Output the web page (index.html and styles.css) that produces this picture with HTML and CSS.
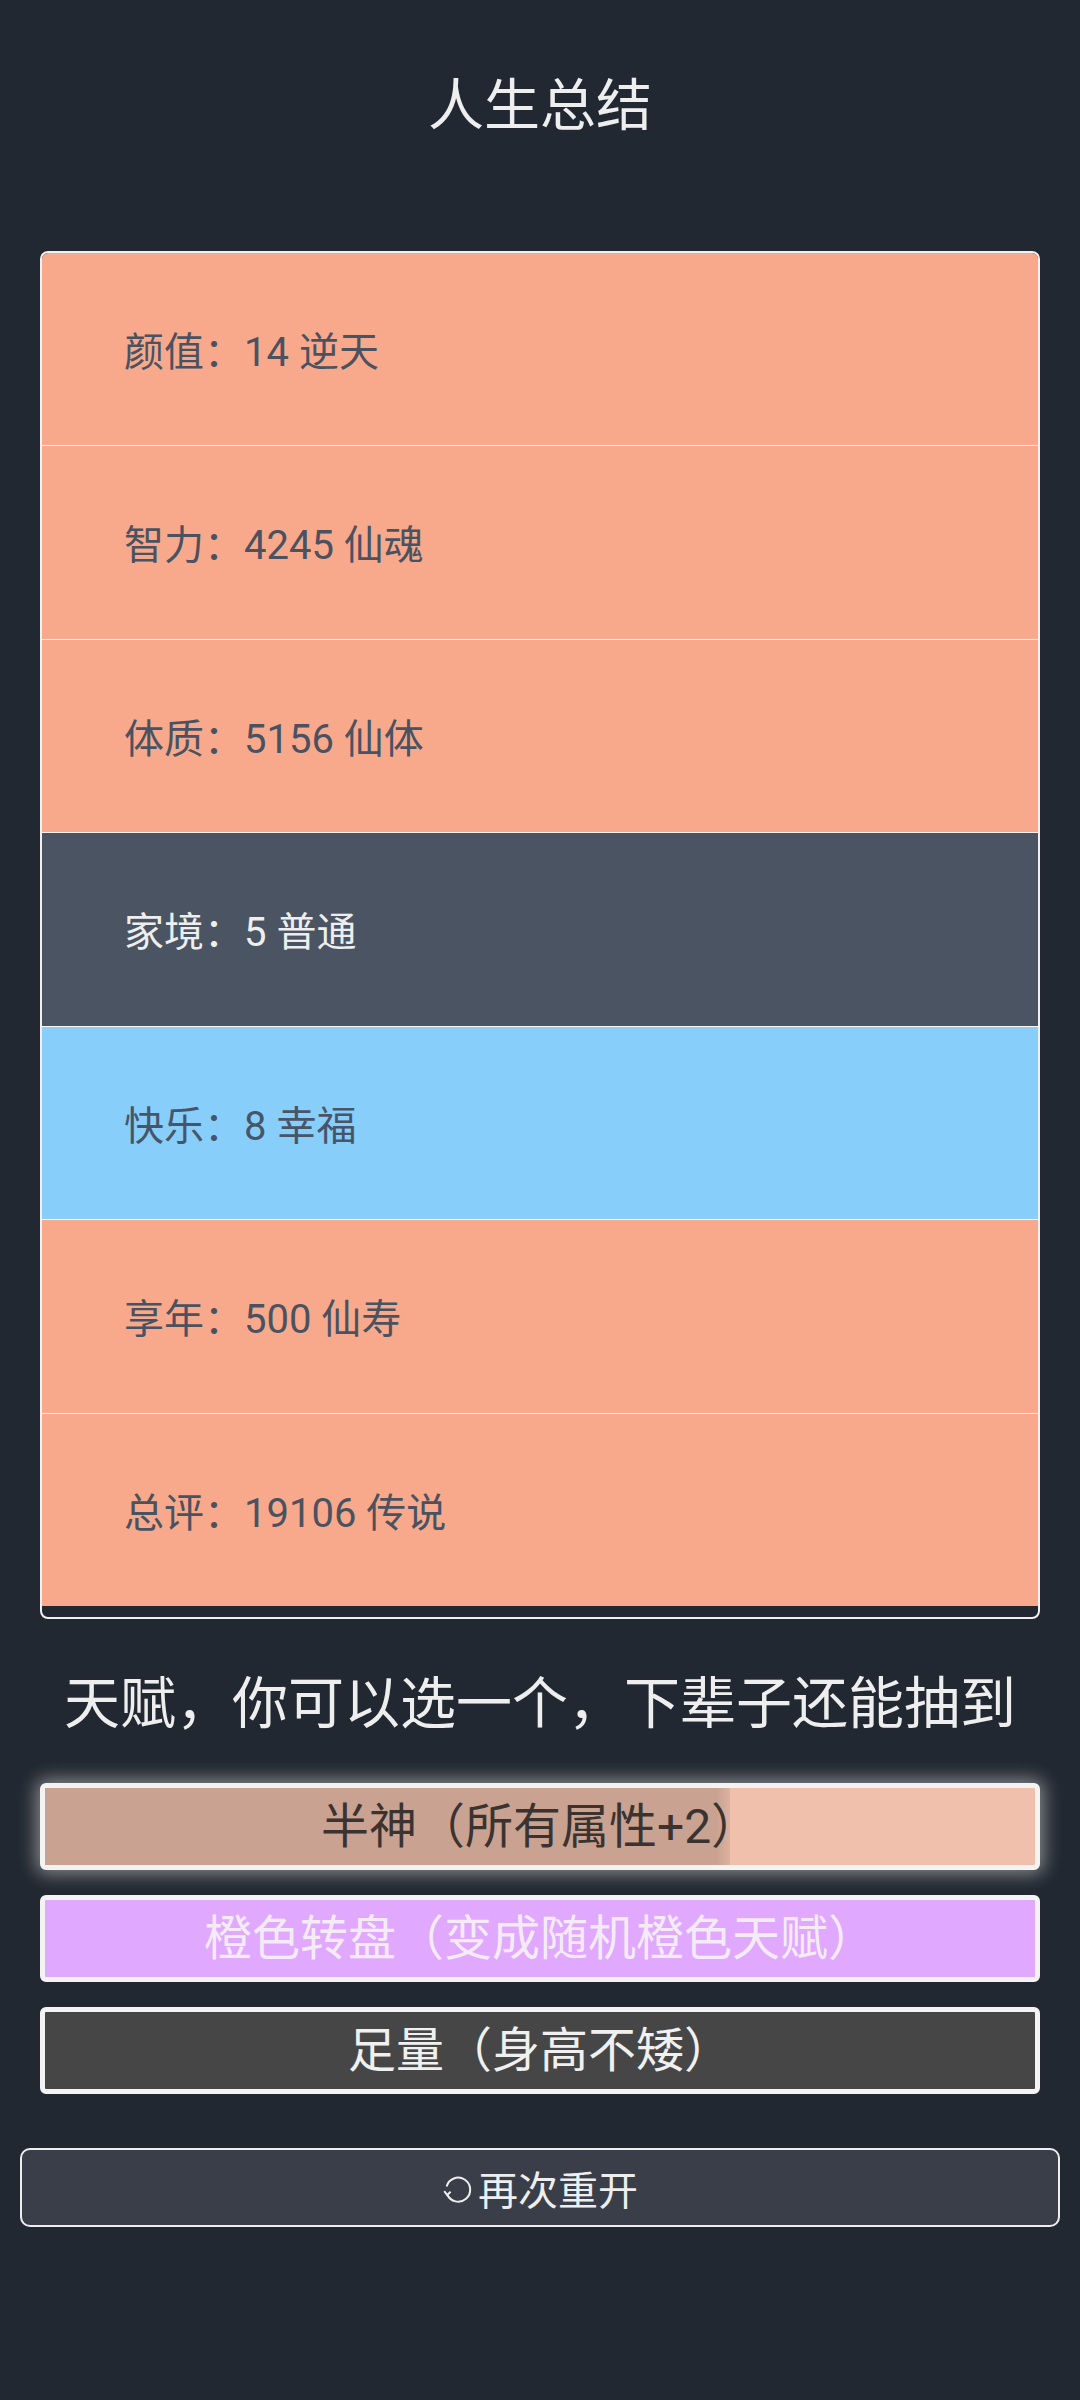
FILE: index.html
```html
<!DOCTYPE html>
<html>
  <head>
    <meta charset="UTF-8">
    <title>人生总结</title>
    <link rel="stylesheet" href="styles.css">
  </head>
  <body>
    <div class="page">
      <h1 class="title">人生总结</h1>

      <div class="summary">
        <div class="row grade3">颜值：14 逆天</div>
        <div class="row grade3">智力：4245 仙魂</div>
        <div class="row grade3">体质：5156 仙体</div>
        <div class="row grade0">家境：5 普通</div>
        <div class="row grade1">快乐：8 幸福</div>
        <div class="row grade3">享年：500 仙寿</div>
        <div class="row grade3">总评：19106 传说</div>
      </div>

      <h2 class="subtitle">天赋，你可以选一个，下辈子还能抽到</h2>

      <ul class="talents">
        <li class="talent t-orange selected">
          <span class="fill" style="width: 69.2%"></span>
          <span class="label">半神（所有属性+2）</span>
        </li>
        <li class="talent t-purple"><span class="label">橙色转盘（变成随机橙色天赋）</span></li>
        <li class="talent t-gray"><span class="label">足量（身高不矮）</span></li>
      </ul>

      <button class="restart">
        <svg class="icon" viewBox="0 0 32 32" width="32" height="32">
          <path d="M5.2 20.5 A12 12 0 1 0 4.6 12.5" fill="none" stroke="#eee" stroke-width="2"/>
          <path d="M2.2 17.2 L5.2 21 L8.6 17.8" fill="none" stroke="#eee" stroke-width="2"/>
        </svg>再次重开
      </button>
    </div>
  </body>
</html>
```

FILE: styles.css
```css
*, ::after, ::before {
    box-sizing: border-box;
}

body {
    margin: 0;
    background-color: #222831;
    font-family: Roboto, "Noto Sans CJK SC", sans-serif;
    color: #eeeeee;
}

.page {
    min-height: 2400px;
    padding-top: 64px;
}

.title {
    margin: 0;
    font-size: 56px;
    font-weight: 400;
    line-height: 84px;
    text-align: center;
}

/* summary card */
.summary {
    margin: 103px 40px 0;
    border: 2px solid #f0f0f0;
    border-radius: 8px;
    overflow: hidden;
    padding-bottom: 11px;
}

.row {
    display: flex;
    align-items: center;
    height: 192px;
    padding-left: 82px;
    font-size: 40px;
    color: #4a5261;
}

.row + .row {
    height: 193.5px;
    border-top: 1.5px solid #fdf4ef;
}

.grade3 {
    background-color: #f8a98b;
}

.grade0 {
    background-color: #4a5462;
    color: #eeeeee;
}

.grade1 {
    background-color: #87cefa;
    color: #475569;
}

.subtitle {
    margin: 43px 0 0;
    font-size: 56px;
    font-weight: 400;
    line-height: 84px;
    text-align: center;
}

/* talent choices */
.talents {
    list-style: none;
    margin: 37px 40px 0;
    padding: 0;
}

.talent {
    position: relative;
    height: 87px;
    border: 5px solid #f3f3f3;
    border-radius: 6px;
    overflow: hidden;
    font-size: 48px;
    line-height: 77px;
    text-align: center;
}

.talent + .talent {
    margin-top: 25px;
}

.talent .label {
    position: relative;
}

.t-orange {
    background-color: #f0c0ad;
    color: #3a3330;
}

.t-orange .fill {
    position: absolute;
    left: 0;
    top: 0;
    bottom: 0;
    background: linear-gradient(to right, #c9a292 98%, #dcb2a0);
}

.selected {
    overflow: visible;
    box-shadow: 0 0 18px 4px rgb(255 255 255 / 45%);
}

.t-purple {
    background-color: #e0a8fe;
    color: #f4ebf6;
}

.t-gray {
    background-color: #464646;
    color: #f0f0f0;
}

/* restart */
.restart {
    display: flex;
    align-items: center;
    justify-content: center;
    width: calc(100% - 40px);
    height: 79px;
    margin: 54px 20px 0;
    padding: 0;
    border: 2px solid #eeeeee;
    border-radius: 10px;
    background-color: #3a3e48;
    color: #eeeeee;
    font-family: inherit;
    font-size: 40px;
}

.restart .icon {
    margin-right: 4px;
    margin-top: 4px;
}
```
